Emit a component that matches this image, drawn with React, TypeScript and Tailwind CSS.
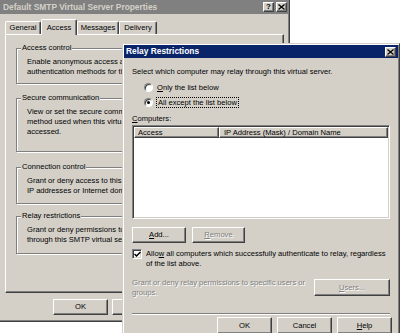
import React from "react";

const raised =
  "border border-t-white border-l-white border-r-[#404040] border-b-[#404040] shadow-[inset_-1px_-1px_0_#808080]";
const sunken =
  "border border-t-[#808080] border-l-[#808080] border-r-white border-b-white shadow-[inset_1px_1px_0_#404040,inset_-1px_-1px_0_#d4d0c8]";
const dim = "text-[#808080] [text-shadow:1px_1px_0_#fff]";

function Button({
  children,
  className = "",
  disabled = false,
}: {
  children: React.ReactNode;
  className?: string;
  disabled?: boolean;
}) {
  return (
    <div
      className={`flex items-center justify-center bg-[#d4d0c8] ${raised} ${disabled ? dim : ""} ${className}`}
    >
      {children}
    </div>
  );
}

function CloseGlyph() {
  return (
    <svg width="7" height="6" viewBox="0 0 7 6">
      <path d="M0.5 0.5L6.5 5.5M6.5 0.5L0.5 5.5" stroke="#000" strokeWidth="1.3" />
    </svg>
  );
}

function TitleButton({ children }: { children: React.ReactNode }) {
  return (
    <div className={`w-[11px] h-[10px] flex items-center justify-center bg-[#d4d0c8] ${raised}`}>
      {children}
    </div>
  );
}

// group box; the text is cut where the relay dialog covers it
function Group({
  label,
  className,
  children,
}: {
  label: string;
  className: string;
  children: React.ReactNode;
}) {
  return (
    <div
      className={`relative w-[257px] border border-[#808080] shadow-[inset_1px_1px_0_#fff,1px_1px_0_#fff] pl-[10px] pt-[8px] leading-[10px] ${className}`}
    >
      <span className="absolute left-[4px] -top-[6px] bg-[#d4d0c8] px-[1px] leading-[10px]">
        {label}
      </span>
      <div className="w-[95px] overflow-hidden whitespace-nowrap">{children}</div>
    </div>
  );
}

function Radio({ checked }: { checked?: boolean }) {
  return (
    <div className="w-[9px] h-[9px] rounded-full bg-white border border-t-[#808080] border-l-[#808080] border-r-white border-b-white shadow-[inset_1px_1px_0_#404040] flex items-center justify-center">
      {checked && <div className="w-[3px] h-[3px] rounded-full bg-black" />}
    </div>
  );
}

const tabBase =
  "flex items-center justify-center border-t border-l border-r border-t-white border-l-white border-r-[#404040] rounded-t-[2px] shadow-[inset_-1px_0_0_#808080]";

function PropertiesWindow() {
  return (
    <div className="absolute left-0 top-0 w-[290px] h-[322px] bg-[#d4d0c8] border-r border-b border-r-[#404040] border-b-[#404040] shadow-[inset_-1px_-1px_0_#808080]">
      <div className="h-[14px] bg-[#808080] flex items-center pl-[3px] pr-[2px]">
        <span className="font-bold text-[8.4px] text-[#d4d0c8] leading-[14px]">
          Default SMTP Virtual Server Properties
        </span>
        <div className="ml-auto flex gap-[2px]">
          <TitleButton>
            <span className="font-bold text-[8px] leading-none">?</span>
          </TitleButton>
          <TitleButton>
            <CloseGlyph />
          </TitleButton>
        </div>
      </div>

      <div className="pl-[5px] pt-[5px] flex items-end h-[20px] relative z-10">
        <div className={`${tabBase} w-[36px] h-[13px]`}>General</div>
        <div className={`${tabBase} w-[36px] h-[16px] -mb-[1px] bg-[#d4d0c8]`}>Access</div>
        <div className={`${tabBase} w-[42px] h-[13px]`}>Messages</div>
        <div className={`${tabBase} w-[38px] h-[13px]`}>Delivery</div>
      </div>

      <div className={`ml-[5px] w-[279px] h-[259px] ${raised} pl-[10px] pt-[13px] flex flex-col`}>
        <Group label="Access control" className="h-[36px]">
          Enable anonymous access and edit the
          <br />
          authentication methods for this resource.
        </Group>
        <Group label="Secure communication" className="h-[54px] mt-[14px]">
          View or set the secure communications
          <br />
          method used when this virtual server is
          <br />
          accessed.
        </Group>
        <Group label="Connection control" className="h-[37px] mt-[15px]">
          Grant or deny access to this resource using
          <br />
          IP addresses or Internet domain names.
        </Group>
        <Group label="Relay restrictions" className="h-[38px] mt-[12px]">
          Grant or deny permissions to relay e-mail
          <br />
          through this SMTP virtual server.
        </Group>
      </div>

      <div className="mt-[6px] pl-[53px] flex gap-[4px]">
        <Button className="w-[55px] h-[16px]">OK</Button>
        <Button className="w-[55px] h-[16px]">Cancel</Button>
      </div>
    </div>
  );
}

function RelayWindow() {
  return (
    <div className="absolute left-[122px] top-[43px] w-[278px] h-[300px] bg-[#d4d0c8] border border-t-[#d4d0c8] border-l-[#d4d0c8] border-r-[#404040] border-b-[#404040] shadow-[inset_1px_1px_0_#fff,inset_-1px_-1px_0_#808080] p-[1px] flex flex-col">
      <div className="h-[13px] bg-[#0a246a] flex items-center pl-[2px] pr-[2px]">
        <span className="font-bold text-[8.4px] text-white leading-[13px]">Relay Restrictions</span>
        <div className="ml-auto">
          <TitleButton>
            <CloseGlyph />
          </TitleButton>
        </div>
      </div>

      <div className="px-[8px] flex flex-col leading-[10px]">
        <div className="mt-[9px]">Select which computer may relay through this virtual server.</div>

        <div className="mt-[3px] h-[15px] pl-[12px] flex items-center gap-[4px]">
          <Radio />
          <span className="first-letter:underline">Only the list below</span>
        </div>
        <div className="h-[15px] pl-[12px] flex items-center gap-[3px]">
          <Radio checked />
          <span className="border border-dotted border-black px-[1px] leading-[9px]">
            All except the list below
          </span>
        </div>

        <div className="mt-[4px] first-letter:underline">Computers:</div>

        <div className={`mt-[1px] h-[94px] bg-white ${sunken} p-[1px]`}>
          <div className="flex h-[11px]">
            <div className={`w-[85px] bg-[#d4d0c8] ${raised} pl-[3px] flex items-center`}>Access</div>
            <div className={`flex-1 bg-[#d4d0c8] ${raised} pl-[4px] flex items-center`}>
              IP Address (Mask) / Domain Name
            </div>
          </div>
        </div>

        <div className="mt-[8px] flex gap-[6px]">
          <Button className="w-[54px] h-[16px]">
            <span className="first-letter:underline">Add...</span>
          </Button>
          <Button className="w-[53px] h-[16px]" disabled>
            <span className="first-letter:underline">Remove</span>
          </Button>
        </div>

        <div className="mt-[6px] flex items-start gap-[4px]">
          <div className={`w-[10px] h-[10px] shrink-0 bg-white ${sunken} flex items-center justify-center`}>
            <svg width="7" height="7" viewBox="0 0 7 7">
              <path d="M0.5 3L2.5 5L6.5 1" stroke="#000" strokeWidth="1.5" fill="none" />
            </svg>
          </div>
          <div>
            Allo<span className="underline">w</span> all computers which successfully authenticate to relay, regardless
            <br />
            of the list above.
          </div>
        </div>

        <div className="mt-[9px] flex items-start">
          <div className={dim}>
            Grant or deny relay permissions to specific users or
            <br />
            groups.
          </div>
          <Button className="ml-auto mt-[1px] w-[76px] h-[17px]" disabled>
            <span className="first-letter:underline">Users...</span>
          </Button>
        </div>

        <div className="mt-[15px] border-t border-b border-t-[#808080] border-b-white" />

        <div className="mt-[2px] -mr-[2px] flex justify-end gap-[5px]">
          <Button className="w-[55px] h-[17px]">OK</Button>
          <Button className="w-[55px] h-[17px]">Cancel</Button>
          <Button className="w-[55px] h-[17px]">
            <span className="first-letter:underline">Help</span>
          </Button>
        </div>
      </div>
    </div>
  );
}

export default function App() {
  return (
    <div className="relative w-[400px] h-[333px] overflow-hidden bg-white font-['Liberation_Sans',Arial,sans-serif] text-[7.6px] text-black">
      <PropertiesWindow />
      <RelayWindow />
    </div>
  );
}
